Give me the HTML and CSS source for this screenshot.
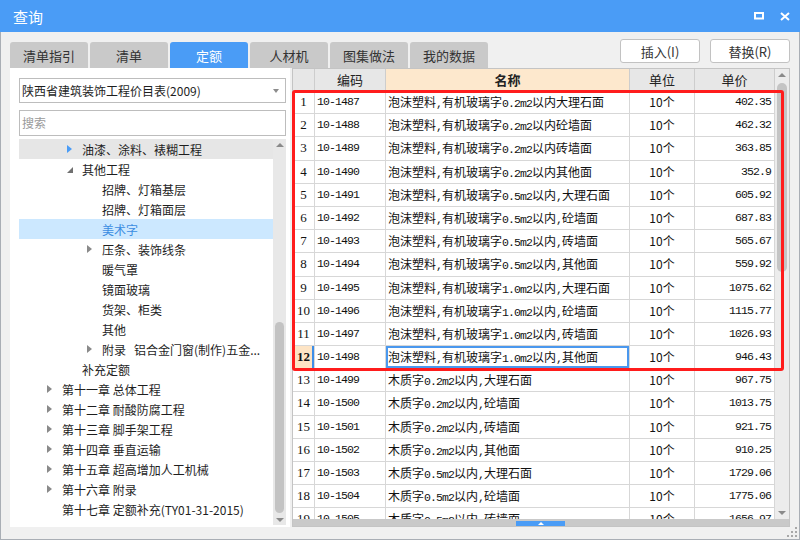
FILE: index.html
```html
<!DOCTYPE html>
<html lang="zh-CN">
<head>
<meta charset="utf-8">
<title>查询</title>
<link rel="stylesheet" href="styles.css">
</head>
<body>
<div class="window">
  <div class="titlebar">
    <span class="title">查询</span>
    <div class="tb-icons">
      <svg width="10" height="8" viewBox="0 0 10 8"><rect x="1" y="1" width="8" height="5.5" fill="none" stroke="#fff" stroke-width="2"/></svg>
      <svg width="10" height="9" viewBox="0 0 10 9"><path d="M1 1 L9 8 M9 1 L1 8" stroke="#fff" stroke-width="2" fill="none"/></svg>
    </div>
  </div>
  <div class="content">
    <div class="toprow">
      <div class="tabs">
        <div class="tab">清单指引</div>
        <div class="tab">清单</div>
        <div class="tab active">定额</div>
        <div class="tab">人材机</div>
        <div class="tab">图集做法</div>
        <div class="tab">我的数据</div>
      </div>
      <div class="actions">
        <div class="btn">插入(I)</div>
        <div class="btn">替换(R)</div>
      </div>
    </div>
    <div class="main">
      <div class="leftpanel">
        <div class="select"><span>陕西省建筑装饰工程价目表(2009)</span><span class="caret"></span></div>
        <div class="search">搜索</div>
        <div class="tree">
          <div class="tree-list">
            <div class="trow l2 hover"><span class="arr"><i class="tri-r blue"></i></span>油漆、涂料、裱糊工程</div>
            <div class="trow l2"><span class="arr"><i class="tri-d"></i></span>其他工程</div>
            <div class="trow l3"><span class="arr"></span>招牌、灯箱基层</div>
            <div class="trow l3"><span class="arr"></span>招牌、灯箱面层</div>
            <div class="trow l3 sel"><span class="arr"></span>美术字</div>
            <div class="trow l3"><span class="arr"><i class="tri-r"></i></span>压条、装饰线条</div>
            <div class="trow l3"><span class="arr"></span>暖气罩</div>
            <div class="trow l3"><span class="arr"></span>镜面玻璃</div>
            <div class="trow l3"><span class="arr"></span>货架、柜类</div>
            <div class="trow l3"><span class="arr"></span>其他</div>
            <div class="trow l3"><span class="arr"><i class="tri-r"></i></span>附录<span class="sp"></span>铝合金门窗(制作)五金...</div>
            <div class="trow l2"><span class="arr"></span>补充定额</div>
            <div class="trow l1"><span class="arr"><i class="tri-r"></i></span>第十一章 总体工程</div>
            <div class="trow l1"><span class="arr"><i class="tri-r"></i></span>第十二章 耐酸防腐工程</div>
            <div class="trow l1"><span class="arr"><i class="tri-r"></i></span>第十三章 脚手架工程</div>
            <div class="trow l1"><span class="arr"><i class="tri-r"></i></span>第十四章 垂直运输</div>
            <div class="trow l1"><span class="arr"><i class="tri-r"></i></span>第十五章 超高增加人工机械</div>
            <div class="trow l1"><span class="arr"><i class="tri-r"></i></span>第十六章 附录</div>
            <div class="trow l1"><span class="arr"></span>第十七章 定额补充(TY01-31-2015)</div>
          </div>
          <div class="vscroll">
            <i class="sa-up"></i>
            <div class="lthumb"></div>
            <i class="sa-down"></i>
          </div>
        </div>
      </div>
      <div class="gridpanel">
        <div class="grid-body">
          <div class="grid">
            <div class="hdr">
              <div></div><div>编码</div><div class="hname">名称</div><div>单位</div><div>单价</div>
            </div>
            <div class="row"><div class="num">1</div><div class="code">10-1487</div><div class="name">泡沫塑料<span class="a">,</span>有机玻璃字<span class="a">0.2m2</span>以内大理石面</div><div class="unit">10个</div><div class="price">402.35</div></div>
            <div class="row"><div class="num">2</div><div class="code">10-1488</div><div class="name">泡沫塑料<span class="a">,</span>有机玻璃字<span class="a">0.2m2</span>以内砼墙面</div><div class="unit">10个</div><div class="price">462.32</div></div>
            <div class="row"><div class="num">3</div><div class="code">10-1489</div><div class="name">泡沫塑料<span class="a">,</span>有机玻璃字<span class="a">0.2m2</span>以内砖墙面</div><div class="unit">10个</div><div class="price">363.85</div></div>
            <div class="row"><div class="num">4</div><div class="code">10-1490</div><div class="name">泡沫塑料<span class="a">,</span>有机玻璃字<span class="a">0.2m2</span>以内其他面</div><div class="unit">10个</div><div class="price">352.9</div></div>
            <div class="row"><div class="num">5</div><div class="code">10-1491</div><div class="name">泡沫塑料<span class="a">,</span>有机玻璃字<span class="a">0.5m2</span>以内<span class="a">,</span>大理石面</div><div class="unit">10个</div><div class="price">605.92</div></div>
            <div class="row"><div class="num">6</div><div class="code">10-1492</div><div class="name">泡沫塑料<span class="a">,</span>有机玻璃字<span class="a">0.5m2</span>以内<span class="a">,</span>砼墙面</div><div class="unit">10个</div><div class="price">687.83</div></div>
            <div class="row"><div class="num">7</div><div class="code">10-1493</div><div class="name">泡沫塑料<span class="a">,</span>有机玻璃字<span class="a">0.5m2</span>以内<span class="a">,</span>砖墙面</div><div class="unit">10个</div><div class="price">565.67</div></div>
            <div class="row"><div class="num">8</div><div class="code">10-1494</div><div class="name">泡沫塑料<span class="a">,</span>有机玻璃字<span class="a">0.5m2</span>以内<span class="a">,</span>其他面</div><div class="unit">10个</div><div class="price">559.92</div></div>
            <div class="row"><div class="num">9</div><div class="code">10-1495</div><div class="name">泡沫塑料<span class="a">,</span>有机玻璃字<span class="a">1.0m2</span>以内<span class="a">,</span>大理石面</div><div class="unit">10个</div><div class="price">1075.62</div></div>
            <div class="row"><div class="num">10</div><div class="code">10-1496</div><div class="name">泡沫塑料<span class="a">,</span>有机玻璃字<span class="a">1.0m2</span>以内<span class="a">,</span>砼墙面</div><div class="unit">10个</div><div class="price">1115.77</div></div>
            <div class="row"><div class="num">11</div><div class="code">10-1497</div><div class="name">泡沫塑料<span class="a">,</span>有机玻璃字<span class="a">1.0m2</span>以内<span class="a">,</span>砖墙面</div><div class="unit">10个</div><div class="price">1026.93</div></div>
            <div class="row cur"><div class="num">12</div><div class="code">10-1498</div><div class="name">泡沫塑料<span class="a">,</span>有机玻璃字<span class="a">1.0m2</span>以内<span class="a">,</span>其他面</div><div class="unit">10个</div><div class="price">946.43</div></div>
            <div class="row"><div class="num">13</div><div class="code">10-1499</div><div class="name">木质字<span class="a">0.2m2</span>以内<span class="a">,</span>大理石面</div><div class="unit">10个</div><div class="price">967.75</div></div>
            <div class="row"><div class="num">14</div><div class="code">10-1500</div><div class="name">木质字<span class="a">0.2m2</span>以内<span class="a">,</span>砼墙面</div><div class="unit">10个</div><div class="price">1013.75</div></div>
            <div class="row"><div class="num">15</div><div class="code">10-1501</div><div class="name">木质字<span class="a">0.2m2</span>以内<span class="a">,</span>砖墙面</div><div class="unit">10个</div><div class="price">921.75</div></div>
            <div class="row"><div class="num">16</div><div class="code">10-1502</div><div class="name">木质字<span class="a">0.2m2</span>以内<span class="a">,</span>其他面</div><div class="unit">10个</div><div class="price">910.25</div></div>
            <div class="row"><div class="num">17</div><div class="code">10-1503</div><div class="name">木质字<span class="a">0.5m2</span>以内<span class="a">,</span>大理石面</div><div class="unit">10个</div><div class="price">1729.06</div></div>
            <div class="row"><div class="num">18</div><div class="code">10-1504</div><div class="name">木质字<span class="a">0.5m2</span>以内<span class="a">,</span>砼墙面</div><div class="unit">10个</div><div class="price">1775.06</div></div>
            <div class="row"><div class="num">19</div><div class="code">10-1505</div><div class="name">木质字<span class="a">0.5m2</span>以内<span class="a">,</span>砖墙面</div><div class="unit">10个</div><div class="price">1656.97</div></div>
          </div>
          <div class="gscroll">
            <i class="sa-up"></i>
            <div class="gthumb"></div>
            <i class="sa-down"></i>
          </div>
        </div>
        <div class="hscroll"><div class="hthumb"><i class="hup"></i></div></div>
        <div class="redbox"></div>
      </div>
    </div>
  </div>
  <svg class="grip" width="10" height="10" viewBox="0 0 10 10">
    <rect x="8" y="0" width="2" height="2" fill="#a8a8a8"/>
    <rect x="8" y="4" width="2" height="2" fill="#a8a8a8"/>
    <rect x="4" y="4" width="2" height="2" fill="#a8a8a8"/>
    <rect x="8" y="8" width="2" height="2" fill="#a8a8a8"/>
    <rect x="4" y="8" width="2" height="2" fill="#a8a8a8"/>
    <rect x="0" y="8" width="2" height="2" fill="#a8a8a8"/>
  </svg>
</div>
</body>
</html>
```
FILE: styles.css
```css
* { box-sizing: border-box; }
html, body { margin: 0; padding: 0; }
body {
  width: 800px; height: 540px; overflow: hidden;
  font-family: "Noto Sans CJK SC", "Noto Sans", sans-serif;
  font-size: 12px; color: #1e1e1e; background: #f0f0f0;
}
.window {
  position: relative; width: 800px; height: 540px;
  background: #f0f0f0;
  border: 1px solid #a9aeb5; border-top: 0;
  display: flex; flex-direction: column;
}
.titlebar {
  height: 32px; margin: 0 -1px; background: #4a9cf6; color: #fff;
  display: flex; align-items: center; padding: 0 10px 0 13px;
}
.title { font-size: 15px; flex: 1; }
.tb-icons { display: flex; align-items: center; gap: 16px; }
.tb-icons svg { display: block; }

.content { padding: 7px 9px 0 9px; display: flex; flex-direction: column; }
.toprow { height: 29px; display: flex; justify-content: space-between; }
.tabs { display: flex; gap: 2px; align-self: flex-end; }
.tab {
  width: 78px; height: 26px; background: #c9c9c9; border-radius: 3px 3px 0 0;
  font-size: 13px; color: #333; display: flex; align-items: center; justify-content: center;
}
.tab.active { background: #4a9cf6; color: #fff; }
.actions { display: flex; gap: 10px; align-self: flex-start; }
.btn {
  width: 80px; height: 24px; background: #fff; border: 1px solid #c2c2c2; border-radius: 3px;
  font-size: 13px; color: #333; display: flex; align-items: center; justify-content: center;
}

.main { display: flex; gap: 2px; height: 459px; }
.leftpanel {
  width: 280px; background: #fff; padding: 10px 4px 2px 9px;
  display: flex; flex-direction: column;
}
.select {
  height: 25px; border: 1px solid #bdbdbd; display: flex; align-items: center;
  justify-content: space-between; padding: 0 6px 0 2px; color: #1e1e1e;
}
.caret {
  width: 0; height: 0; border-top: 4px solid #8c8c8c;
  border-left: 3.5px solid transparent; border-right: 3.5px solid transparent;
}
.search {
  margin-top: 7px; height: 26px; border: 1px solid #bdbdbd; color: #9a9a9a;
  padding-left: 2px; line-height: 24px;
}
.tree { margin-top: 3px; flex: 1; min-height: 0; display: flex; overflow: hidden; }
.tree-list { width: 254px; overflow: hidden; }
.trow { height: 20px; display: flex; align-items: center; white-space: nowrap; color: #1e1e1e; }
.trow.l1 { padding-left: 28px; }
.trow.l2 { padding-left: 48px; }
.trow.l3 { padding-left: 68px; }
.trow.hover { background: #e6e6e6; }
.trow.sel { background: #cce8ff; color: #3b8de2; }
.arr { width: 15px; height: 20px; display: flex; align-items: center; flex: none; }
.tri-r {
  width: 0; height: 0; border-left: 5px solid #8a8a8a;
  border-top: 4.5px solid transparent; border-bottom: 4.5px solid transparent;
}
.tri-r.blue { border-left-color: #4a9cf6; }
.tri-d {
  width: 0; height: 0; border-left: 6px solid transparent; border-bottom: 6px solid #707070;
  margin-top: 2px;
}
.sp { display: inline-block; width: 8px; }

.vscroll, .gscroll {
  display: flex; flex-direction: column; align-items: center; background: #e8e8e8;
}
.vscroll { width: 13px; }
.sa-up {
  width: 0; height: 0; border-bottom: 4px solid #8a8a8a;
  border-left: 4px solid transparent; border-right: 4px solid transparent;
}
.sa-down {
  width: 0; height: 0; border-top: 4px solid #8a8a8a;
  border-left: 4px solid transparent; border-right: 4px solid transparent;
  margin-top: auto;
}
.vscroll .sa-up { margin-top: 4px; }
.vscroll .sa-down { margin-bottom: 3px; }
.lthumb { width: 9px; height: 191px; margin-top: 175px; border-radius: 5px; background: #c3c3c3; }

.gridpanel {
  position: relative; width: 498px; background: #fff; border: 1px solid #c4c4c4;
  display: flex; flex-direction: column;
}
.grid-body { height: 450px; display: flex; overflow: hidden; }
.grid { width: 482px; display: flex; flex-direction: column; }
.hdr, .row { display: grid; grid-template-columns: 22px 71px 244px 65px 80px; flex: none; }
.hdr { height: 22px; background: #e7e7e7; }
.hdr > div {
  border-right: 1px solid #cdcdcd; border-bottom: 1px solid #cdcdcd;
  text-align: center; line-height: 21px; font-size: 13px; color: #222;
}
.hdr .hname { background: #fde8cd; font-weight: bold; }
.row { height: 23.2px; }
.row > div {
  border-right: 1px solid #d7d7d7; border-bottom: 1px solid #d7d7d7;
  line-height: 22px; overflow: hidden; white-space: nowrap; color: #111;
}
.code, .price, .a {
  font-family: "Liberation Mono", monospace; font-size: 11.5px; letter-spacing: -0.9px;
}
.num { text-align: center; font-family: "Liberation Serif", serif; font-size: 13px; }
.code { padding-left: 2px; }
.name { padding-left: 2px; font-size: 12px; }
.unit { text-align: center; font-size: 12px; }
.price { text-align: right; padding-right: 3px; }
.row.cur .num { background: #fde4c5; font-weight: bold; box-shadow: inset -2px 0 0 #3d8ee8; }
.row.cur .name { box-shadow: inset 0 0 0 2px #4a98ee; }

.gscroll { width: 14px; background: #ececec; }
.gscroll .sa-up { margin-top: 4px; }
.gscroll .sa-down { margin-bottom: 4px; }
.gthumb { width: 10px; height: 189px; margin-top: 6px; border-radius: 5px; background: #c4c4c4; }

.hscroll { height: 7px; background: #c9c9c9; display: flex; align-items: flex-end; }
.hthumb {
  margin-left: 223px; width: 49px; height: 5px; background: #4a9cf6;
  display: flex; justify-content: center; align-items: center;
}
.hup {
  width: 0; height: 0; border-bottom: 3px solid #fff;
  border-left: 3px solid transparent; border-right: 3px solid transparent;
}

.redbox {
  position: absolute; left: -1px; top: 21px; width: 492px; height: 281px;
  border: 3px solid #ff1c1c; border-radius: 3px; pointer-events: none;
}
.grip { position: absolute; right: 2px; bottom: 2px; }
```
